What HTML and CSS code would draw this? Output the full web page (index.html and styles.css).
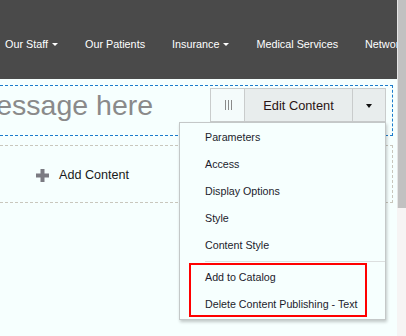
FILE: index.html
```html
<!DOCTYPE html>
<html lang="en">
<head>
  <meta charset="UTF-8" />
  <meta name="viewport" content="width=device-width, initial-scale=1" />
  <title>Page Editor</title>
  <link rel="stylesheet" href="styles.css">
</head>
<body>
  <div class="window">
    <div class="page">
      <!-- Top navigation -->
      <header class="topnav">
        <ul class="nav-list">
          <li><a href="#">Our Staff<span class="caret"></span></a></li>
          <li><a href="#">Our Patients</a></li>
          <li><a href="#">Insurance<span class="caret"></span></a></li>
          <li><a href="#">Medical Services</a></li>
          <li><a href="#">Network</a></li>
        </ul>
      </header>

      <!-- Editable region with its toolbar -->
      <section class="region region-edit">
        <h1 class="region-title">Your message here</h1>
        <div class="toolbar">
          <span class="tb-grip">
            <svg width="7" height="10" viewBox="0 0 7 10">
              <rect x="0" y="0" width="1" height="10" fill="#8a8a8a"/>
              <rect x="3" y="0" width="1" height="10" fill="#8a8a8a"/>
              <rect x="6" y="0" width="1" height="10" fill="#8a8a8a"/>
            </svg>
          </span>
          <button class="tb-edit">Edit Content</button>
          <button class="tb-toggle"><span class="caret-dark"></span></button>

          <ul class="dropdown">
            <li>Parameters</li>
            <li>Access</li>
            <li>Display Options</li>
            <li>Style</li>
            <li>Content Style</li>
            <li class="divider"></li>
            <li>Add to Catalog</li>
            <li>Delete Content Publishing - Text</li>
            <!-- annotation around the last two entries -->
            <div class="highlight"></div>
          </ul>
        </div>
      </section>

      <!-- Empty region placeholder -->
      <section class="region region-add">
        <svg class="plus" width="13" height="13" viewBox="0 0 13 13">
          <rect x="0" y="4.5" width="13" height="4" fill="#7b7b82"/>
          <rect x="4.5" y="0" width="4" height="13" fill="#7b7b82"/>
        </svg>
        <span class="add-label">Add Content</span>
      </section>
    </div>

    <!-- Browser scrollbar -->
    <div class="scrollbar"><div class="scroll-thumb"></div></div>
  </div>
</body>
</html>
```

FILE: styles.css
```css
/* Reset and global settings */
* {
  margin: 0;
  padding: 0;
  box-sizing: border-box;
}
body {
  font-family: "Liberation Sans", Arial, sans-serif;
  background-color: #f6fffe;
  color: #222;
  overflow: hidden;
}

.window {
  display: flex;
  width: 406px;
  height: 336px;
}
.page {
  width: 397px;
  flex-shrink: 0;
  overflow: hidden;
}

/* Top navigation */
.topnav {
  height: 79px;
  background-color: #4a4a4a;
}
.nav-list {
  list-style: none;
  display: flex;
  align-items: center;
  gap: 27px;
  height: 100%;
  padding: 9px 0 0 5px;
  white-space: nowrap;
}
.nav-list li {
  flex-shrink: 0;
}
.nav-list a {
  color: #fff;
  text-decoration: none;
  font-size: 10.8px;
  display: flex;
  align-items: center;
}
.caret {
  display: inline-block;
  margin-left: 4px;
  margin-top: 1px;
  border-top: 3px solid #fff;
  border-left: 3px solid transparent;
  border-right: 3px solid transparent;
}

/* Regions */
.region {
  margin-left: -100px;
  margin-right: 4px;
}
.region-edit {
  display: flex;
  align-items: flex-start;
  height: 51px;
  margin-top: 6px;
  padding: 2px 6px 0 6px;
  border: 1px dashed #1b7ccc;
}
.region-title {
  flex-shrink: 0;
  margin-top: 1px;
  font-size: 28.5px;
  font-weight: normal;
  line-height: 32px;
  color: #8a8a8a;
  white-space: nowrap;
}

/* Edit toolbar */
.toolbar {
  position: relative;
  display: flex;
  margin-left: auto;
  height: 34px;
  border: 1px solid #c9cccc;
}
.toolbar button {
  border: none;
  font-family: inherit;
  cursor: pointer;
  background-color: #e8eded;
}
.tb-grip {
  display: flex;
  align-items: center;
  justify-content: center;
  width: 34px;
  padding-left: 1px;
  border-right: 1px solid #c9cccc;
  background-color: #f4fbfb;
}
.tb-edit {
  width: 108px;
  border-right: 1px solid #c9cccc !important;
  font-size: 12.8px;
  color: #2a1414;
}
.tb-toggle {
  width: 32px;
  display: flex;
  align-items: center;
  justify-content: center;
}
.caret-dark {
  display: inline-block;
  margin-top: 1px;
  border-top: 4px solid #111;
  border-left: 3.5px solid transparent;
  border-right: 3.5px solid transparent;
}

/* Dropdown menu */
.dropdown {
  position: absolute;
  top: calc(100% + 1px);
  right: -1px;
  width: 207px;
  list-style: none;
  padding: 1px 0;
  background-color: #f6fffe;
  border: 1px solid #c4c8c8;
  box-shadow: 1px 2px 3px rgba(0, 0, 0, 0.22);
  z-index: 10;
}
.dropdown li {
  height: 27px;
  line-height: 27px;
  padding-left: 25px;
  font-size: 10.7px;
  color: #1c1c2c;
  white-space: nowrap;
}
.dropdown li.divider {
  height: 1px;
  margin: 2px 0 2px 25px;
  padding: 0;
  background-color: #dcdfdf;
}
.highlight {
  position: absolute;
  left: 9px;
  top: 140px;
  width: 178px;
  height: 54px;
  border: 2px solid #f00;
}

/* Empty placeholder region */
.region-add {
  display: flex;
  align-items: center;
  height: 58px;
  margin-top: 9px;
  padding: 2px 0 0 135px;
  border: 1px dashed #c9c7bd;
}
.plus {
  margin-right: 10px;
}
.add-label {
  font-size: 12.6px;
  color: #1a1a1a;
}

/* Scrollbar */
.scrollbar {
  width: 9px;
  height: 100%;
  background-color: #f6f4f4;
}
.scroll-thumb {
  height: 208px;
  background-color: #c1c1c1;
  border-left: 1px solid #e6e6e6;
}
```
